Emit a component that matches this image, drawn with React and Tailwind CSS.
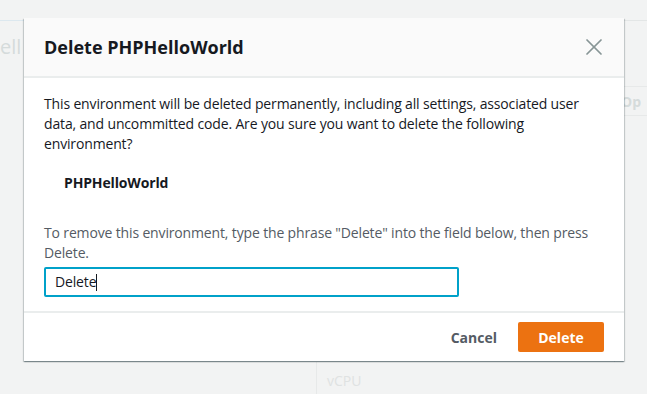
import { X } from 'lucide-react';

function Background() {
  return (
    <div className="flex h-full flex-col pt-[20px] text-[#d5dbdb]">
      <div className="flex flex-1">
        <div className="w-[316px] border-t border-[#dce8ef] bg-[#f2f3f3]">
          <div className="mt-[12px] w-[22px] overflow-hidden text-[20px] leading-[28px]">elloW</div>
        </div>
        <div className="flex flex-1 flex-col">
          <div className="ml-[308px] h-full border-t border-l border-[#e3e6e6]">
            <div className="h-[66px] border-b border-[#e7e9e9]" />
            <div className="h-[29px] border-b border-[#e7e9e9] px-[6px] text-[14px] font-bold leading-[29px]">Op</div>
          </div>
        </div>
      </div>
      <div className="flex h-[32px]">
        <div className="w-[316px]" />
        <div className="flex-1 border-l border-[#e7e9e9] pl-[10px] pt-[8px] text-[14px] text-[#dfe2e2]">vCPU</div>
      </div>
    </div>
  );
}

function App() {
  return (
    <div className="relative h-[394px] w-[647px] overflow-hidden bg-[#f2f3f3]" style={{ fontFamily: '"Open Sans", "Noto Sans", sans-serif' }}>
      <Background />

      <div className="absolute left-[24px] top-[18px] w-[600px] bg-white shadow-[0_1px_1px_0_rgba(0,28,36,0.3),1px_1px_1px_0_rgba(0,28,36,0.15),-1px_1px_1px_0_rgba(0,28,36,0.15)]">
        <div className="flex h-[60px] items-center justify-between border-b-2 border-[#eaeded] bg-[#fafafa] pl-[20px] pr-[16px]">
          <h2 className="text-[18px] font-bold text-[#16191f]">Delete PHPHelloWorld</h2>
          <X size={28} strokeWidth={1.5} className="text-[#879596]" />
        </div>

        <div className="px-[20px] pt-[16px] pb-[14px] text-[14px] leading-[20px] tracking-[-0.15px] text-[#16191f]">
          <p>
            This environment will be deleted permanently, including all settings, associated user data, and uncommitted code. Are you sure you want to delete the following environment?
          </p>
          <p className="mt-[19px] pl-[20px] font-bold">PHPHelloWorld</p>
          <p className="mt-[30px] text-[#545b64]">
            To remove this environment, type the phrase "Delete" into the field below, then press Delete.
          </p>
          <div className="mt-[4px] flex h-[30px] w-[415px] items-center rounded-[2px] border-2 border-[#00a1c9] px-[9px] text-[14px]">
            <span className="text-[#16191f]">Delete</span>
            <span className="h-[17px] w-px bg-[#16191f]" />
          </div>
        </div>

        <div className="flex items-center justify-end gap-[21px] border-t-2 border-[#eaeded] px-[20px] py-[9px]">
          <button className="text-[14px] font-bold text-[#545b64]">Cancel</button>
          <button className="h-[30px] w-[86px] rounded-[2px] bg-[#ec7211] text-[14px] font-bold text-white">Delete</button>
        </div>
      </div>
    </div>
  );
}

export default App;
